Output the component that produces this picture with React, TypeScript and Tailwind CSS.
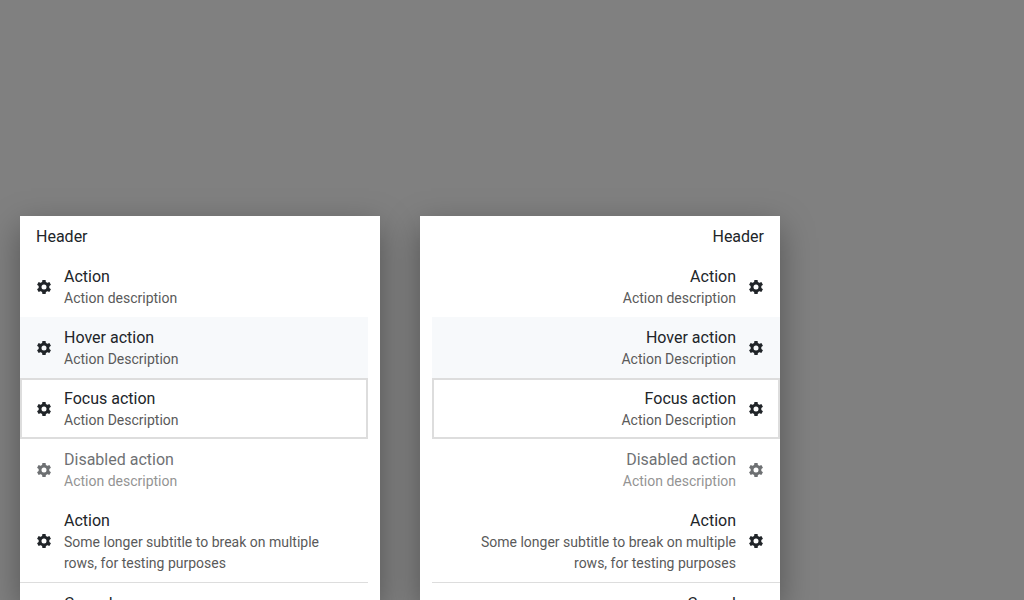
type Item = { title: string; description?: string; state?: 'hover' | 'focus' | 'disabled'; divider?: boolean };

const items: Item[] = [
  { title: 'Action', description: 'Action description' },
  { title: 'Hover action', description: 'Action Description', state: 'hover' },
  { title: 'Focus action', description: 'Action Description', state: 'focus' },
  { title: 'Disabled action', description: 'Action description', state: 'disabled' },
  { title: 'Action', description: 'Some longer subtitle to break on multiple rows, for testing purposes' },
  { title: 'Cancel', divider: true },
];

const teeth = [0, 60, 120, 180, 240, 300];

function Gear() {
  return (
    <svg viewBox="0 0 16 16" className="size-4 shrink-0" fill="currentColor" aria-hidden="true">
      <circle cx="8" cy="8" r="3.95" fill="none" stroke="currentColor" strokeWidth="2.9" />
      {teeth.map((angle) => (
        <path key={angle} d="M6.4 0.9h3.2l.4 3.300H6z" transform={`rotate(${angle} 8 8)`} />
      ))}
    </svg>
  );
}

function Row({ item }: { item: Item }) {
  const background = item.state === 'hover' ? 'bg-[#f7f9fb]' : 'bg-white';
  const border = item.state === 'focus' ? 'border-[#dddddd]' : 'border-transparent';
  return (
    <li className={item.divider ? 'border-t border-[#dddddd]' : ''}>
      <button
        type="button"
        disabled={item.state === 'disabled'}
        className={`flex w-full border-2 py-1.5 ps-3.5 pe-7 text-start ${background} ${border}`}
      >
        <span className={`flex w-full items-center gap-3 ${item.state === 'disabled' ? 'opacity-65' : ''}`}>
          {item.description ? <Gear /> : <span className="size-4 shrink-0" />}
          <span className="flex min-w-0 flex-1 flex-col pt-0.5">
            <span className="text-base leading-[22px]">{item.title}</span>
            {item.description && <span className="text-sm leading-[21px] text-[#5a5a5a]">{item.description}</span>}
          </span>
        </span>
      </button>
    </li>
  );
}

function ActionSheet({ dir }: { dir: 'ltr' | 'rtl' }) {
  return (
    <section
      dir={dir}
      className="h-full w-[360px] shrink-0 overflow-hidden bg-white pe-3 shadow-[0_11px_32px_rgba(0,0,0,0.35)]"
    >
      <h2 className="px-4 pt-2.5 pb-2 text-base leading-[22px]">Header</h2>
      <ul>
        {items.map((item, index) => (
          <Row key={index} item={item} />
        ))}
      </ul>
    </section>
  );
}

export default function App() {
  return (
    <main className="flex h-screen gap-10 overflow-hidden bg-[#808080] px-5 pt-54 font-['Roboto',sans-serif] text-[#212529]">
      <ActionSheet dir="ltr" />
      <ActionSheet dir="rtl" />
    </main>
  );
}
